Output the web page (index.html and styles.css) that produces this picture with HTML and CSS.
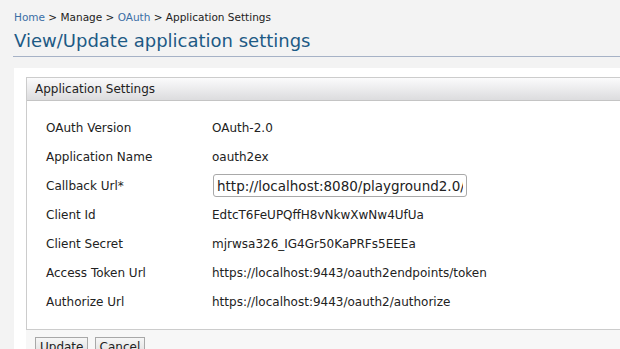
FILE: index.html
```html
<!DOCTYPE html>
<html lang="en">
<head>
    <meta charset="UTF-8">
    <title>View/Update application settings</title>
    <link rel="stylesheet" href="styles.css">
</head>
<body>

<div class="breadcrumb">
    <a href="#">Home</a> &gt; Manage &gt; <a href="#">OAuth</a> &gt; Application Settings
</div>
<h2 class="page-title">View/Update application settings</h2>

<div class="content">
    <div class="settings-box">
        <div class="settings-header">Application Settings</div>
        <table class="settings-table">
            <tr><td class="label">OAuth Version</td><td>OAuth-2.0</td></tr>
            <tr><td class="label">Application Name</td><td>oauth2ex</td></tr>
            <tr><td class="label">Callback Url*</td><td><input type="text" class="url-input" value="http://localhost:8080/playground2.0/oauth2callback"></td></tr>
            <tr><td class="label">Client Id</td><td>EdtcT6FeUPQffH8vNkwXwNw4UfUa</td></tr>
            <tr><td class="label">Client Secret</td><td>mjrwsa326_IG4Gr50KaPRFs5EEEa</td></tr>
            <tr><td class="label">Access Token Url</td><td>https://localhost:9443/oauth2endpoints/token</td></tr>
            <tr><td class="label">Authorize Url</td><td>https://localhost:9443/oauth2/authorize</td></tr>
        </table>
    </div>
    <div class="buttons">
        <button>Update</button>
        <button>Cancel</button>
    </div>
</div>

</body>
</html>
```

FILE: styles.css
```css
body {
    font-family: "DejaVu Sans", Verdana, sans-serif;
    margin: 0;
    padding: 0;
    background-color: #f3f3f3;
    color: #222;
    overflow: hidden;
}
.breadcrumb {
    font-size: 10.5px;
    padding: 11px 0 0 14px;
    height: 14px;
}
.breadcrumb a {
    color: #3a6ea5;
    text-decoration: none;
}
.page-title {
    font-size: 18px;
    font-weight: normal;
    color: #1d5a85;
    margin: 5px 0 0 13px;
    padding: 0 0 5px 1px;
    border-bottom: 1px solid #a6b2c6;
}
.content {
    background-color: #fff;
    margin: 11px 0 0 14px;
    padding: 9px 0 0 12px;
}
.settings-box {
    border: 1px solid #cccccc;
    border-right: none;
}
.settings-header {
    font-size: 12px;
    height: 22px;
    line-height: 22px;
    padding-left: 8px;
    background: linear-gradient(#fbfbfc, #dcdcde);
    border-bottom: 1px solid #c4c4c4;
}
.settings-table {
    border-collapse: collapse;
    font-size: 12px;
    margin: 12px 0 13px 19px;
}
.settings-table td {
    height: 29px;
    padding: 0;
    white-space: nowrap;
}
.settings-table td.label {
    width: 166px;
}
.url-input {
    font-family: "DejaVu Sans", Verdana, sans-serif;
    font-size: 13.5px;
    width: 254px;
    height: 23px;
    box-sizing: border-box;
    padding: 0 3px;
    border: 1px solid #a9a9a9;
    border-radius: 3px;
    color: #222;
    margin-left: 1px;
}
.buttons {
    background-color: #f7f7f7;
    padding: 6px 0 0 9px;
    height: 20px;
}
.buttons button {
    font-family: "DejaVu Sans", Verdana, sans-serif;
    font-size: 12px;
    padding: 2px 4px;
    border: 1px solid #a8a8a8;
    background: linear-gradient(#f6f6f6, #dddddd);
    color: #222;
    margin-right: 1px;
}
```
